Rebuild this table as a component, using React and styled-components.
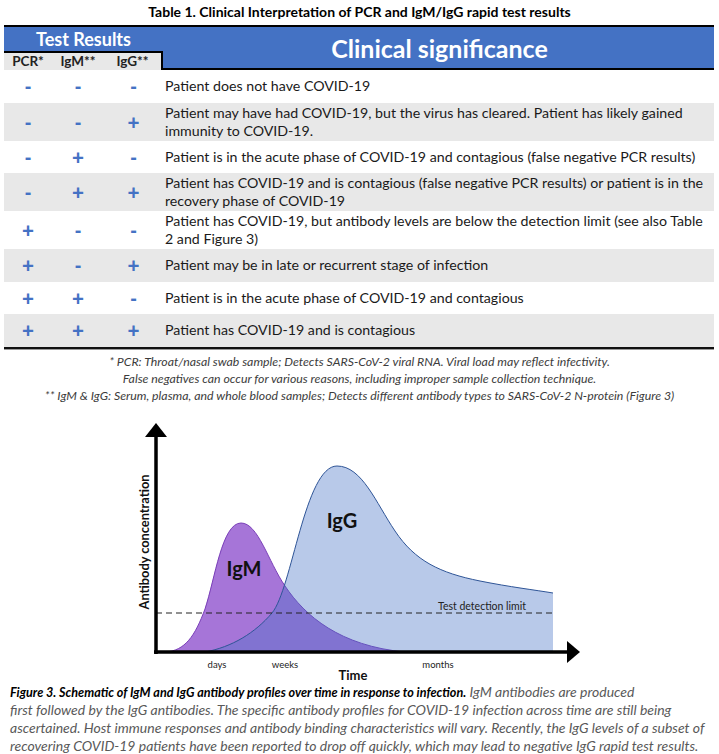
import React from "react";
import styled, { createGlobalStyle } from "styled-components";

const GlobalStyle = createGlobalStyle`
  html, body {
    margin: 0;
    padding: 0;
    background: #ffffff;
  }
  body {
    font-family: Lato, "Open Sans", "Liberation Sans", sans-serif;
    color: #111;
  }
`;

const Page = styled.div`
  width: 719px;
  height: 754px;
  overflow: hidden;
`;

const Title = styled.h1`
  margin: 0;
  padding-top: 3px;
  height: 22px;
  font-size: 14px;
  line-height: 18px;
  font-weight: 700;
  text-align: center;
  color: #000;
`;

const Table = styled.div`
  margin: 0 5px 0 4px;
  border-top: 2px solid #000;
  border-bottom: 2px solid #111;
  box-shadow: 0 1px 0 #9a9a9a;
`;

const HeaderRow = styled.div`
  display: grid;
  grid-template-columns: 159px 1fr;
  background: #4472c4;
`;

const ResultsHead = styled.div`
  display: flex;
  flex-direction: column;
`;

const GroupTitle = styled.div`
  height: 24px;
  line-height: 24px;
  text-align: center;
  color: #fff;
  font-size: 18px;
  font-weight: 700;
`;

const SubHeads = styled.div`
  display: grid;
  grid-template-columns: 48px 52px 1fr;
  height: 17px;
  background: #e8e8e8;
  border-top: 2px solid #000;
  border-right: 2px solid #000;
`;

const SubHead = styled.div`
  text-align: center;
  font-size: 13.5px;
  line-height: 17px;
  font-weight: 700;
  color: #222;
`;

const Significance = styled.div`
  height: 41px;
  border-bottom: 2px solid #000;
  display: flex;
  align-items: center;
  justify-content: center;
  color: #fff;
  font-size: 25px;
  font-weight: 700;
  padding-left: 2px;
`;

const Row = styled.div`
  display: grid;
  grid-template-columns: 48px 52px 59px 1fr;
  align-items: center;
  min-height: 32.5px;
  background: ${(p) => (p.$shaded ? "#e8e8e8" : "#ffffff")};
`;

const Sign = styled.div`
  text-align: center;
  color: #4472c4;
  font-weight: 700;
  font-size: ${(p) => (p.$plus ? "21px" : "19px")};
  line-height: 20px;
  font-family: "Open Sans", Lato, sans-serif;
`;

const Meaning = styled.div`
  padding: 1px 0 1px 2px;
  font-size: 14.2px;
  line-height: 18px;
  color: #1a1a1a;
  white-space: nowrap;
`;

const Notes = styled.div`
  margin-top: 4px;
  text-align: center;
  font-style: italic;
  font-size: 12.3px;
  line-height: 17px;
  color: #3c3c3c;
  white-space: nowrap;
`;

const Chart = styled.svg`
  display: block;
  font-family: Lato, "Open Sans", sans-serif;
`;

const Caption = styled.p`
  margin: 0;
  padding-left: 10px;
  font-style: italic;
  font-size: 14px;
  line-height: 17.8px;
  color: #595959;
  white-space: nowrap;
`;

const Lead = styled.b`
  color: #000;
  font-weight: 700;
  font-size: 12.6px;
`;

const rows = [
  ["-", "-", "-", ["Patient does not have COVID-19"]],
  [
    "-",
    "-",
    "+",
    [
      "Patient may have had COVID-19, but the virus has cleared. Patient has likely gained",
      "immunity to COVID-19.",
    ],
  ],
  [
    "-",
    "+",
    "-",
    [
      "Patient is in the acute phase of COVID-19 and contagious (false negative PCR results)",
    ],
  ],
  [
    "-",
    "+",
    "+",
    [
      "Patient has COVID-19 and is contagious (false negative PCR results) or patient is in the",
      "recovery phase of COVID-19",
    ],
  ],
  [
    "+",
    "-",
    "-",
    [
      "Patient has COVID-19, but antibody levels are below the detection limit (see also Table",
      "2 and Figure 3)",
    ],
  ],
  ["+", "-", "+", ["Patient may be in late or recurrent stage of infection"]],
  ["+", "+", "-", ["Patient is in the acute phase of COVID-19 and contagious"]],
  ["+", "+", "+", ["Patient has COVID-19 and is contagious"]],
];

function AntibodyChart() {
  return (
    <Chart width="719" height="279" viewBox="0 403 719 279">
      <path
        d="M165,651 C185,650 195,635 205,608 C215,578 222,522 241,522 C258,522 268,560 285,585 C305,615 340,645 405,651 Z"
        fill="#a675d8"
        stroke="#7a3fb8"
        strokeWidth="1"
      />
      <path
        d="M205,651 C232,646 255,632 272,612 C292,588 305,465 337,465 C362,465 376,502 395,530 C415,560 440,572 480,580 C510,586 535,589 553,592 L553,651 Z"
        fill="#4472c4"
        fillOpacity="0.38"
      />
      <path
        d="M205,651 C232,646 255,632 272,612 C292,588 305,465 337,465 C362,465 376,502 395,530 C415,560 440,572 480,580 C510,586 535,589 553,592"
        fill="none"
        stroke="#2f5597"
        strokeWidth="1"
      />
      <line x1="156" y1="612" x2="556" y2="612" stroke="#222" strokeWidth="1" strokeDasharray="6 4" />
      <text x="438" y="609" fontSize="10.5" fill="#222">
        Test detection limit
      </text>
      <text x="342" y="527" fontSize="20" fontWeight="700" textAnchor="middle" fill="#111">
        IgG
      </text>
      <text x="244" y="575" fontSize="20" fontWeight="700" textAnchor="middle" fill="#111">
        IgM
      </text>
      <line x1="156" y1="432" x2="156" y2="653" stroke="#000" strokeWidth="3.5" />
      <polygon points="145,436 156,422 167,436" fill="#000" />
      <line x1="154" y1="651" x2="569" y2="651" stroke="#000" strokeWidth="3.5" />
      <polygon points="567,640 580,651 567,662" fill="#000" />
      <text
        x="0"
        y="0"
        fontSize="12.8"
        fontWeight="700"
        textAnchor="middle"
        fill="#111"
        transform="translate(149 541) rotate(-90)"
      >
        Antibody concentration
      </text>
      <text x="217" y="667" fontSize="9.5" textAnchor="middle" fill="#222">days</text>
      <text x="285" y="667" fontSize="9.5" textAnchor="middle" fill="#222">weeks</text>
      <text x="438" y="667" fontSize="9.5" textAnchor="middle" fill="#222">months</text>
      <text x="353" y="679" fontSize="13" fontWeight="700" textAnchor="middle" fill="#111">
        Time
      </text>
    </Chart>
  );
}

export default function App() {
  return (
    <Page>
      <GlobalStyle />
      <Title>Table 1. Clinical Interpretation of PCR and IgM/IgG rapid test results</Title>
      <Table>
        <HeaderRow>
          <ResultsHead>
            <GroupTitle>Test Results</GroupTitle>
            <SubHeads>
              <SubHead>PCR*</SubHead>
              <SubHead>IgM**</SubHead>
              <SubHead>IgG**</SubHead>
            </SubHeads>
          </ResultsHead>
          <Significance>Clinical significance</Significance>
        </HeaderRow>
        {rows.map(([pcr, igm, igg, text], i) => (
          <Row key={i} $shaded={i % 2 === 1}>
            <Sign $plus={pcr === "+"}>{pcr}</Sign>
            <Sign $plus={igm === "+"}>{igm}</Sign>
            <Sign $plus={igg === "+"}>{igg}</Sign>
            <Meaning>
              {text.map((line, j) => (
                <div key={j}>{line}</div>
              ))}
            </Meaning>
          </Row>
        ))}
      </Table>
      <Notes>
        <div>* PCR: Throat/nasal swab sample; Detects SARS-CoV-2 viral RNA. Viral load may reflect infectivity.</div>
        <div>False negatives can occur for various reasons, including improper sample collection technique.</div>
        <div>
          ** IgM &amp; IgG: Serum, plasma, and whole blood samples; Detects different antibody types to SARS-CoV-2 N-protein (Figure 3)
        </div>
      </Notes>
      <AntibodyChart />
      <Caption>
        <Lead>Figure 3. Schematic of IgM and IgG antibody profiles over time in response to infection.</Lead>{" "}
        IgM antibodies are produced
        <br />
        first followed by the IgG antibodies. The specific antibody profiles for COVID-19 infection across time are still being
        <br />
        ascertained. Host immune responses and antibody binding characteristics will vary. Recently, the IgG levels of a subset of
        <br />
        recovering COVID-19 patients have been reported to drop off quickly, which may lead to negative IgG rapid test results.
      </Caption>
    </Page>
  );
}
